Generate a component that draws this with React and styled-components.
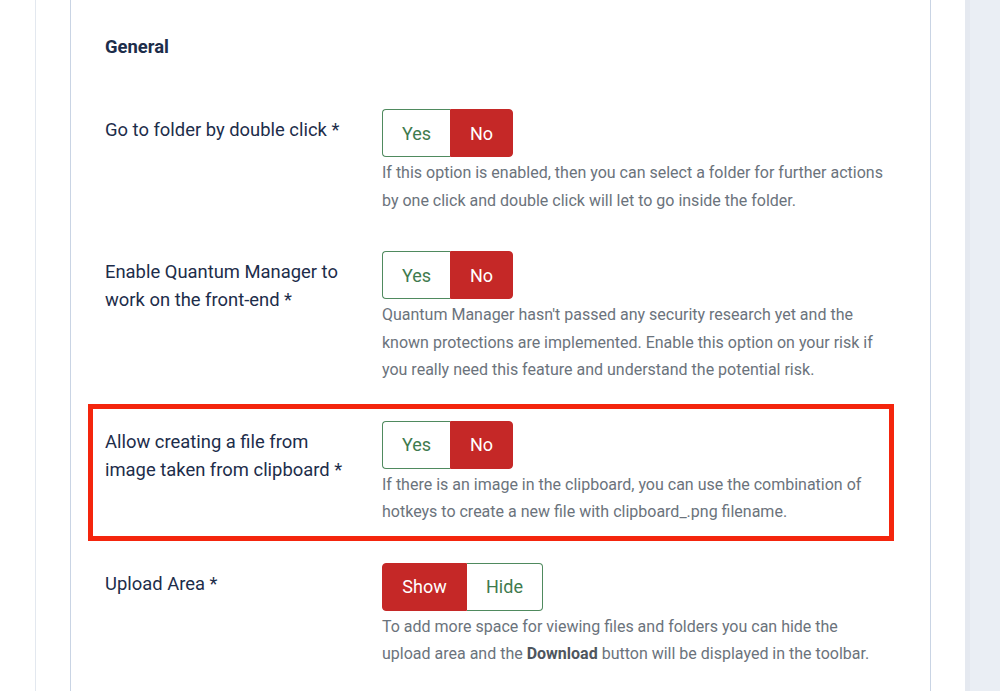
import React from 'react';
import styled, { createGlobalStyle } from 'styled-components';

const GlobalStyle = createGlobalStyle`
  html, body {
    margin: 0;
    padding: 0;
    background: #fff;
  }
  body {
    font-family: Roboto, 'Liberation Sans', sans-serif;
    -webkit-font-smoothing: antialiased;
  }
`;

const Page = styled.div`
  display: flex;
  height: 691px;
  overflow: hidden;
  background: #fff;
`;

const Main = styled.div`
  flex: 0 0 965px;
  display: flex;
  padding-left: 35px;
  box-sizing: border-box;
`;

const Card = styled.div`
  flex: 1;
  display: flex;
  border-left: 1px solid #e3e8ef;
  padding: 0 34px;
`;

const Fieldset = styled.section`
  flex: 1;
  border-left: 1px solid #c9d4e4;
  border-right: 1px solid #c9d4e4;
  padding: 35px 34px 0 34px;
`;

const Heading = styled.h3`
  margin: 0 0 50px;
  font-size: 18.4px;
  line-height: 24px;
  font-weight: 700;
  color: #1d2d4a;
`;

const Row = styled.div`
  position: relative;
  display: grid;
  grid-template-columns: 245px 1fr;
  column-gap: 32px;
  margin-bottom: 37px;

  ${(p) =>
    p.$highlight &&
    `
    &::before {
      content: '';
      position: absolute;
      top: -17px;
      left: -17px;
      right: 2px;
      bottom: -15px;
      border: 5px solid #f4250d;
      pointer-events: none;
    }
  `}
`;

const Label = styled.label`
  padding-top: 7px;
  font-size: 18.4px;
  line-height: 28px;
  color: #1d2d4a;
`;

const Controls = styled.div`
  display: flex;
  flex-direction: column;
  align-items: flex-start;
`;

const Switcher = styled.div`
  display: inline-flex;
  height: 48px;
`;

const Option = styled.span`
  display: flex;
  align-items: center;
  justify-content: center;
  width: ${(p) => p.$width}px;
  box-sizing: border-box;
  font-size: 18px;
  background: ${(p) => (p.$active ? '#c52827' : '#fff')};
  color: ${(p) => (p.$active ? '#fff' : '#3f7b4e')};
  border: 1px solid ${(p) => (p.$active ? '#c52827' : '#4f8a5e')};
  border-left-width: ${(p) => (p.$first || p.$active ? 1 : 0)}px;
  border-right-width: ${(p) => (p.$last || p.$active ? 1 : 0)}px;

  &:first-child {
    border-radius: 4px 0 0 4px;
  }
  &:last-child {
    border-radius: 0 4px 4px 0;
  }
`;

const Description = styled.div`
  max-width: 505px;
  margin-top: 2px;
  font-size: 16px;
  line-height: 27.5px;
  color: #6b737c;

  b {
    color: #4f565e;
    font-weight: 700;
  }
`;

const Sidebar = styled.div`
  flex: 1;
  background: #eaeef4;
  border-left: 5px solid #e5e9f0;
`;

const fields = [
  {
    label: 'Go to folder by double click *',
    options: [
      { text: 'Yes', width: 68 },
      { text: 'No', width: 63, active: true },
    ],
    desc: 'If this option is enabled, then you can select a folder for further actions by one click and double click will let to go inside the folder.',
  },
  {
    label: 'Enable Quantum Manager to work on the front-end *',
    options: [
      { text: 'Yes', width: 68 },
      { text: 'No', width: 63, active: true },
    ],
    desc: "Quantum Manager hasn't passed any security research yet and the known protections are implemented. Enable this option on your risk if you really need this feature and understand the potential risk.",
  },
  {
    label: 'Allow creating a file from image taken from clipboard *',
    highlight: true,
    options: [
      { text: 'Yes', width: 68 },
      { text: 'No', width: 63, active: true },
    ],
    desc: 'If there is an image in the clipboard, you can use the combination of hotkeys to create a new file with clipboard_.png filename.',
  },
  {
    label: 'Upload Area *',
    options: [
      { text: 'Show', width: 85, active: true },
      { text: 'Hide', width: 76 },
    ],
    desc: (
      <>
        To add more space for viewing files and folders you can hide the upload area and the <b>Download</b> button will be displayed in the toolbar.
      </>
    ),
  },
];

export default function App() {
  return (
    <>
      <GlobalStyle />
      <Page>
        <Main>
          <Card>
            <Fieldset>
              <Heading>General</Heading>
              {fields.map((f, i) => (
                <Row key={i} $highlight={f.highlight}>
                  <Label>{f.label}</Label>
                  <Controls>
                    <Switcher>
                      {f.options.map((o, j) => (
                        <Option
                          key={o.text}
                          $width={o.width}
                          $active={o.active}
                          $first={j === 0}
                          $last={j === f.options.length - 1}
                        >
                          {o.text}
                        </Option>
                      ))}
                    </Switcher>
                    <Description>{f.desc}</Description>
                  </Controls>
                </Row>
              ))}
            </Fieldset>
          </Card>
        </Main>
        <Sidebar />
      </Page>
    </>
  );
}
